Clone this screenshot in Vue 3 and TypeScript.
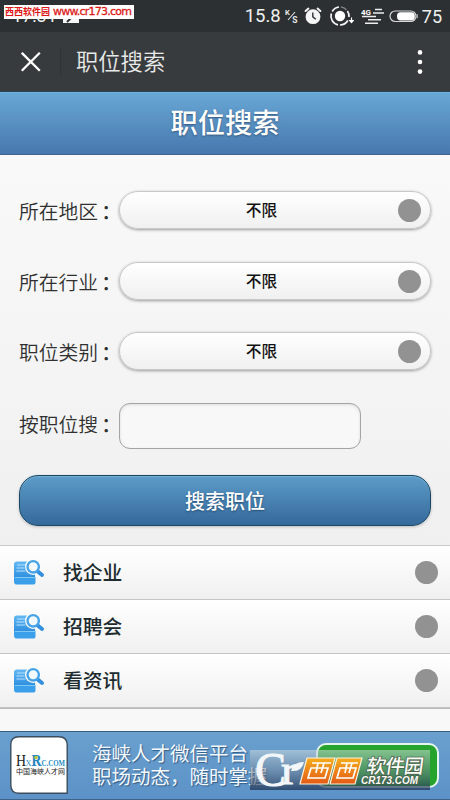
<script setup lang="ts">
interface Field {
  label: string
  value: string
}

const fields: Field[] = [
  { label: '所在地区', value: '不限' },
  { label: '所在行业', value: '不限' },
  { label: '职位类别', value: '不限' },
]

const links: string[] = ['找企业', '招聘会', '看资讯']
</script>

<template>
  <div class="screen">
    <div class="status">
      <span class="clock">17:31</span>
      <svg class="notice" width="18" height="20" viewBox="0 0 18 20">
        <rect x="1" y="3" width="16" height="17" fill="#f4f6f6" />
        <path d="M5 19l6-6" stroke="#2d3032" stroke-width="2" />
      </svg>
      <div class="status-right">
        <span class="speed">15.8</span>
        <svg class="unit" width="13" height="16" viewBox="0 0 13 16">
          <text x="0" y="7" font-size="7.5" font-weight="700" fill="#e4e6e6">K</text>
          <path d="M3 12L10 4" stroke="#e4e6e6" stroke-width="1.1" />
          <text x="7.2" y="15" font-size="8.5" font-weight="700" fill="#e4e6e6">S</text>
        </svg>
        <svg class="alarm" width="18" height="18" viewBox="0 0 18 18">
          <circle cx="9" cy="9.7" r="7.4" fill="#f4f6f6" />
          <path d="M1.6 4L4.4 1.6M16.4 4L13.6 1.6" stroke="#f4f6f6" stroke-width="2" stroke-linecap="round" />
          <path d="M8.8 5.5v4.3l3 2.4" fill="none" stroke="#2d3032" stroke-width="1.4" />
        </svg>
        <svg class="data" width="25" height="22" viewBox="0 0 25 22">
          <circle cx="11" cy="11" r="5.2" fill="#fff" />
          <path d="M10 2A9 9 0 0 0 3.2 6.5M2.3 8.5A9 9 0 0 0 9 19.8M11 20A9 9 0 0 0 18.8 15.5M20 12A9 9 0 0 0 18.4 6" fill="none" stroke="#f4f6f6" stroke-width="1.7" />
          <path d="M12 2a9 9 0 0 1 5.4 2.7" fill="none" stroke="#7d8082" stroke-width="1.5" />
          <path d="M22.5 12.5v3M20.8 15.5l1.7 2 1.7-2z" fill="#fff" stroke="#fff" stroke-width="1.2" />
        </svg>
        <svg class="signal" width="24" height="18" viewBox="0 0 24 18">
          <text x="0" y="7.8" font-size="8" font-weight="700" fill="#fff" textLength="10" lengthAdjust="spacingAndGlyphs">4G</text>
          <path d="M14 2.5h7M12 6h11M1 9.5h14M7 12.7h13M4 16.2h13" stroke="#eceeee" stroke-width="1.4" />
        </svg>
        <svg class="battery" width="29" height="13" viewBox="0 0 29 13">
          <rect x="1" y="1" width="26" height="10.5" rx="5.25" fill="none" stroke="#d6d8d8" stroke-width="1.2" />
          <rect x="8" y="2.2" width="17.8" height="8.2" rx="3.6" fill="#fff" />
          <path d="M28.2 4.2v4" stroke="#d6d8d8" />
        </svg>
        <span class="level">75</span>
      </div>
      <div class="site-tag"><b>西西软件园</b><span>www.cr173.com</span></div>
    </div>

    <div class="nav">
      <svg class="close" width="20" height="20" viewBox="0 0 20 20">
        <path d="M.8 .8l18 18M18.8 .8L.8 18.8" stroke="#fff" stroke-width="2.3" />
      </svg>
      <i class="sep"></i>
      <span class="nav-title">职位搜索</span>
      <svg class="more" width="6" height="26" viewBox="0 0 6 26">
        <circle cx="3" cy="3.4" r="2.3" fill="#fff" />
        <circle cx="3" cy="13" r="2.3" fill="#fff" />
        <circle cx="3" cy="22.6" r="2.3" fill="#fff" />
      </svg>
    </div>

    <h1 class="title">职位搜索</h1>

    <div class="form">
      <div v-for="f in fields" :key="f.label" class="row">
        <span class="label">{{ f.label }}<span class="colon">：</span></span>
        <div class="select">
          <span>{{ f.value }}</span>
          <i class="dot"></i>
        </div>
      </div>
      <div class="row search-row">
        <span class="label">按职位搜<span class="colon">：</span></span>
        <input class="field" type="text" />
      </div>
      <button class="submit">搜索职位</button>
    </div>

    <div class="list">
      <div v-for="name in links" :key="name" class="item">
        <svg class="item-icon" width="32" height="28" viewBox="0 0 32 28">
          <defs>
            <linearGradient id="book" x1="0" y1="0" x2="0" y2="1">
              <stop offset="0" stop-color="#62b8f2" />
              <stop offset="1" stop-color="#2f8fe0" />
            </linearGradient>
          </defs>
          <path d="M4 2.5H16L22 14V18.5H1V5.5Q1 2.5 4 2.5Z" fill="url(#book)" />
          <path d="M4 6h8M3.5 9h8M3.5 12h9" stroke="#b9e2fb" stroke-width="1.1" />
          <path d="M1 18H22.5V23Q22.5 25.6 20 25.6H4Q1 25.6 1 22.5Z" fill="#3b9fe9" />
          <path d="M2 18.5h20" stroke="#80c9f7" stroke-width="1" />
          <path d="M22 10.5l8 7" stroke="#fcfcfc" stroke-width="6" />
          <circle cx="20.2" cy="7.8" r="8.2" fill="#fcfcfc" />
          <path d="M24.5 12.2l4.5 3.8" stroke="#348fdf" stroke-width="4" stroke-linecap="round" />
          <circle cx="20.2" cy="7.8" r="5.7" fill="#f3faff" stroke="#46a3e8" stroke-width="2.4" />
        </svg>
        <span class="item-name">{{ name }}</span>
        <i class="dot"></i>
      </div>
    </div>

    <div class="banner">
      <svg class="logo" width="58" height="58" viewBox="0 0 58 58">
        <path d="M9 .8H49Q57.2 .8 57.2 9V57.2H9Q.8 57.2 .8 49V9Q.8 .8 9 .8Z" fill="#fff" stroke="#3c4c5c" stroke-width="1.4" />
        <g class="serif">
          <text x="6" y="29.5" font-size="16" fill="#222" textLength="10" lengthAdjust="spacingAndGlyphs">H</text>
          <text x="15.5" y="29.5" font-size="9" fill="#278dc4" textLength="6" lengthAdjust="spacingAndGlyphs">X</text>
          <text x="21.5" y="29.5" font-size="17" font-weight="700" fill="#2485be" textLength="10" lengthAdjust="spacingAndGlyphs">R</text>
          <text x="31.5" y="29.5" font-size="9" font-weight="700" fill="#278dc4" textLength="23.5" lengthAdjust="spacingAndGlyphs">C.COM</text>
          <text x="6" y="38" font-size="7" fill="#222" textLength="49" lengthAdjust="spacingAndGlyphs">中国海峡人才网</text>
        </g>
        <circle cx="26" cy="21.5" r="1.8" fill="#b6cc39" />
      </svg>
      <div class="slogan">
        <span>海峡人才微信平台</span>
        <span>职场动态，随时掌握</span>
      </div>
      <div class="follow"></div>
      <svg class="watermark" width="180" height="40" viewBox="0 0 180 40">
        <defs>
          <linearGradient id="shade" x1="0" y1="0" x2="0" y2="1">
            <stop offset="0" stop-color="#d1dde2" stop-opacity=".55" />
            <stop offset=".45" stop-color="#8090a0" stop-opacity=".5" />
            <stop offset="1" stop-color="#1c2f50" stop-opacity=".72" />
          </linearGradient>
          <linearGradient id="tile" x1="0" y1="0" x2="0" y2="1">
            <stop offset="0" stop-color="#f5ad1c" />
            <stop offset="1" stop-color="#e45a16" />
          </linearGradient>
        </defs>
        <rect width="180" height="40" fill="url(#shade)" />
        <g class="cr" fill="#f2f6f9">
          <text x="5" y="35.5" font-size="49" stroke="#f2f6f9" stroke-width="1" textLength="31" lengthAdjust="spacingAndGlyphs">C</text>
          <text x="31" y="34" font-size="43" stroke="#f2f6f9" stroke-width="1" textLength="16" lengthAdjust="spacingAndGlyphs">r</text>
        </g>
        <path d="M41 21Q43 12 54 12Q52 21 43 21Z" fill="#f2f6f9" />
        <g fill="url(#tile)" stroke="#fff1da" stroke-width="1.2">
          <path d="M57 8H85L78 34H50Z" />
          <path d="M87 8H112L105 34H80Z" />
        </g>
        <g fill="none" stroke="#fff" stroke-width="1.7">
          <path d="M62 13H81M68 13L66 23M74 13L71 23M61 18H78L75 28H58Z" />
          <path d="M91 13H108M97 13L95 23M102 13L99 23M90 18H106L103 28H87Z" />
        </g>
        <g fill="#fafcf6" stroke="#485c4b" stroke-width="1.4" paint-order="stroke">
          <text class="cjk" x="117" y="23.5" font-size="19.5" font-weight="500" transform="translate(2 0) skewX(-8)" textLength="57">软件园</text>
          <text x="111" y="34" font-size="10" font-style="italic" font-weight="700" textLength="57" lengthAdjust="spacingAndGlyphs">CR173.COM</text>
        </g>
      </svg>
    </div>
  </div>
</template>

<style>
body {
  margin: 0;
}
</style>

<style scoped>
.screen {
  width: 450px;
  height: 800px;
  overflow: hidden;
  display: flex;
  flex-direction: column;
  box-sizing: border-box;
  background: linear-gradient(#f9f9f9 155px, #f0f0f0 540px, #f0f0f0 700px, #f8f8f8 710px);
  font-family: "Noto Sans CJK SC", sans-serif;
}
.status {
  position: relative;
  height: 32px;
  flex: none;
  display: flex;
  align-items: center;
  background: #2d3032;
  color: #eef0f0;
  font-family: Roboto, sans-serif;
}
.clock {
  font-size: 18px;
  line-height: 32px;
  padding-left: 12px;
  width: 50px;
  box-sizing: border-box;
  white-space: nowrap;
}
.notice {
  margin-left: 12px;
  align-self: flex-start;
  margin-top: 3px;
}
.status-right {
  margin-left: auto;
  display: flex;
  align-items: center;
  padding-right: 8px;
}
.speed {
  font-size: 18.5px;
}
.unit {
  margin-left: 4px;
}
.alarm {
  margin-left: 6px;
}
.data {
  margin-left: 7px;
}
.signal {
  margin-left: 7px;
}
.battery {
  margin-left: 4px;
}
.level {
  font-size: 18px;
  margin-left: 4px;
}
.site-tag {
  position: absolute;
  left: 4px;
  top: 5px;
  width: 130px;
  height: 14px;
  background: #fff;
  color: #dc1818;
  display: flex;
  align-items: center;
  white-space: nowrap;
}
.site-tag b {
  font: 700 9px/14px "Noto Sans CJK SC", sans-serif;
  width: 48px;
  padding-left: 1px;
}
.site-tag span {
  font: 11px/14px "DejaVu Sans", sans-serif;
  letter-spacing: -0.75px;
  -webkit-text-stroke: 0.3px #dc1818;
}
.nav {
  height: 60px;
  flex: none;
  box-sizing: border-box;
  border-bottom: 1px solid #294457;
  display: flex;
  align-items: center;
  background: #383b3d;
  padding: 0 27px 0 21px;
}
.sep {
  width: 1px;
  height: 28px;
  background: #303335;
  margin: 0 15px 0 19px;
}
.nav-title {
  color: #e8eaea;
  font-size: 22.3px;
  line-height: 32px;
  font-weight: 350;
  padding-bottom: 3px;
}
.more {
  margin-left: auto;
}
.title {
  margin: 0;
  height: 63px;
  flex: none;
  box-sizing: border-box;
  border-bottom: 1px solid #3f638d;
  border-top: 1px solid #70b2dc;
  background: linear-gradient(#68a7d5, #4778ad);
  color: #fff;
  text-align: center;
  font-size: 27.2px;
  font-weight: 500;
  line-height: 56px;
  text-shadow: 0 1px 2px #36577d;
}
.form {
  flex: none;
  height: 390px;
  box-sizing: border-box;
  padding: 35px 19px 18px;
  display: flex;
  flex-direction: column;
}
.row {
  height: 40px;
  margin-bottom: 31px;
  display: flex;
  align-items: center;
}
.label {
  width: 100px;
  flex: none;
  color: #303030;
  font-size: 19.8px;
  font-weight: 350;
  line-height: 30px;
  padding-top: 1px;
  white-space: nowrap;
}
.colon {
  margin-left: 3px;
  font-weight: 500;
}
.select {
  flex: 1;
  height: 38px;
  box-sizing: border-box;
  border: 1px solid #c8c8c8;
  border-radius: 19px;
  background: linear-gradient(#fff, #f0f0f0);
  box-shadow: 0 1px 3px #999;
  display: flex;
  align-items: center;
  padding: 0 9px 0 11px;
}
.select span {
  flex: 1;
  text-align: center;
  text-indent: -6px;
  color: #111;
  font-size: 15.7px;
  font-weight: 500;
  line-height: 36px;
  padding-bottom: 1px;
}
.dot {
  width: 23px;
  height: 23px;
  flex: none;
  border-radius: 50%;
  background: #929292;
}
.row:nth-child(2) {
  margin-bottom: 30px;
}
.row.search-row {
  height: 46px;
  margin: 1px 0 26px;
}
.search-row .label {
  padding: 0 0 4px;
}
.field {
  width: 242px;
  height: 46px;
  box-sizing: border-box;
  border: 1px solid #a4a4a4;
  border-radius: 11px;
  background: #f8f8f8;
  box-shadow: inset 0 1px 3px #ddd;
  outline: none;
}
.submit {
  height: 51px;
  flex: none;
  border: 1px solid #174765;
  border-radius: 19px;
  background: linear-gradient(#5c9cc9, #35699b);
  box-shadow: inset 0 1px #77afd3, 0 1px 3px #bbb;
  color: #fff;
  font: 500 20px/48px "Noto Sans CJK SC", sans-serif;
  text-shadow: 0 1px 2px #244d73;
}
.list {
  flex: none;
  border-top: 1px solid #c9c9c9;
  border-bottom: 1px solid #bbb;
}
.item {
  height: 54px;
  box-sizing: border-box;
  border-bottom: 1px solid #c4c4c4;
  display: flex;
  align-items: center;
  padding: 0 12px 0 13px;
  background: linear-gradient(#fff, #f0f0f0);
}
.item-name {
  margin-left: 18px;
  flex: 1;
  font-size: 19.8px;
  line-height: 40px;
  padding-bottom: 2px;
  color: #202b30;
  font-weight: 500;
}
.banner {
  position: relative;
  height: 69px;
  flex: none;
  box-sizing: border-box;
  margin-top: auto;
  border-top: 1px solid #395c7b;
  border-bottom: 1px solid #3d658b;
  background: linear-gradient(#69a0ce, #5c92c7);
  display: flex;
  align-items: flex-start;
  padding: 4px 0 0 10px;
}
.slogan {
  margin: 5px 0 0 24px;
  display: flex;
  flex-direction: column;
  color: #f4f9ff;
  font-size: 19.5px;
  font-weight: 400;
  line-height: 23px;
  white-space: nowrap;
  text-shadow: 1px 1px 1px #315a85;
}
.follow {
  position: absolute;
  left: 316px;
  top: 11px;
  width: 123px;
  height: 45px;
  box-sizing: border-box;
  border: 2px solid #e4f5ed;
  border-radius: 10px;
  background: #26a32c;
}
.watermark {
  position: absolute;
  left: 250px;
  top: 18px;
  font-family: "Liberation Sans", sans-serif;
}
.cr,
.serif {
  font-family: "Liberation Serif", "Noto Sans CJK SC", serif;
}
.cjk {
  font-family: "Noto Sans CJK SC", sans-serif;
}
.status svg {
  font-family: Roboto, sans-serif;
  flex: none;
}
</style>
